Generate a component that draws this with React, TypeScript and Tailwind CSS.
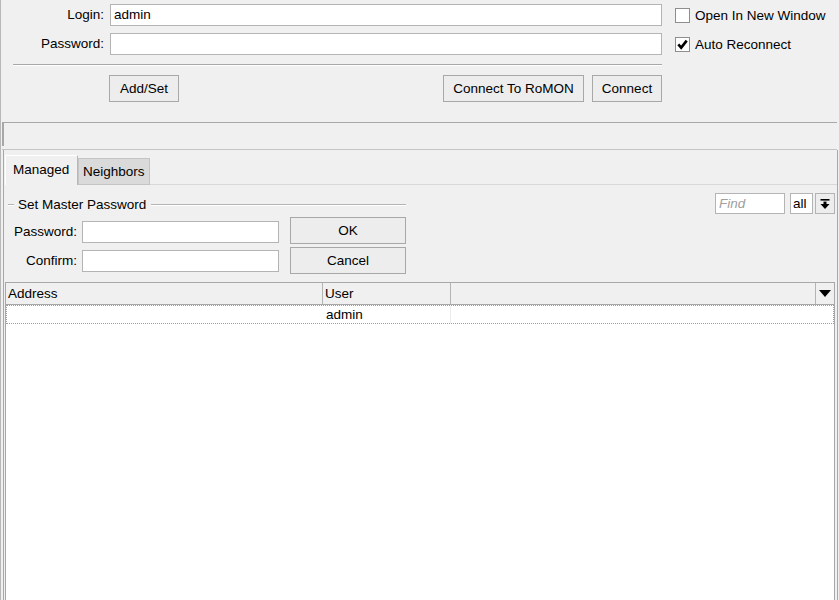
import React from "react";

const inputCls = "bg-white border border-[#b4b4b4] h-[22px] px-[3px] flex items-center";
const btnCls = "bg-[#ededed] border border-[#a8a8a8] h-[27px] flex items-center justify-center";

function Check({ checked }: { checked?: boolean }) {
  return (
    <div className="w-[15px] h-[15px] bg-white border border-[#8e8e8e] flex items-center justify-center">
      {checked && (
        <svg width="11" height="11" viewBox="0 0 11 11">
          <path d="M1.3 5.3 L4.2 8.6 L9.7 1.6" stroke="#000" strokeWidth="2.6" fill="none" />
        </svg>
      )}
    </div>
  );
}

export default function App() {
  return (
    <div className="w-[839px] h-[600px] bg-[#f0f0f0] flex flex-col overflow-hidden border-l border-[#b8b8b8] text-[13.5px] text-black font-['Liberation_Sans',Arial,sans-serif] leading-none">
      {/* Top section */}
      <div className="flex items-start">
        <div className="w-[661px] pt-[4px] flex flex-col">
          <div className="flex items-center">
            <div className="w-[103px] text-right">Login:</div>
            <div className={`${inputCls} ml-[6px] w-[552px]`}>admin</div>
          </div>
          <div className="flex items-center mt-[7px]">
            <div className="w-[103px] text-right">Password:</div>
            <div className={`${inputCls} ml-[6px] w-[552px]`}></div>
          </div>
          <div className="mt-[9px] ml-[12px] w-[649px] h-[2px] border-t border-[#a8a8a8] border-b border-b-white"></div>
          <div className="flex mt-[9px]">
            <div className={`${btnCls} ml-[108px] w-[70px]`}>Add/Set</div>
            <div className={`${btnCls} ml-auto w-[141px]`}>Connect To RoMON</div>
            <div className={`${btnCls} ml-[8px] w-[70px]`}>Connect</div>
          </div>
        </div>
        <div className="ml-[13px] pt-[8px] flex flex-col gap-[14px]">
          <div className="flex items-center gap-[5px]">
            <Check />
            <span>Open In New Window</span>
          </div>
          <div className="flex items-center gap-[5px]">
            <Check checked />
            <span>Auto Reconnect</span>
          </div>
        </div>
      </div>

      {/* Status bar */}
      <div className="mt-[20px] ml-[1px] mr-[2px] h-[28px] border-t border-[#a8a8a8] border-b border-b-[#c4c4c4] flex">
        <div className="w-[3px] h-[23px] border-l-2 border-[#a8a8a8]"></div>
      </div>

      {/* Lower panel */}
      <div className="flex-1 ml-[2px] mr-[1px] border-l border-r border-[#a8a8a8] flex flex-col">
        {/* Tabs */}
        <div className="flex items-end h-[35px]">
          <div className="ml-[1px] w-[73px] h-[30px] border-t border-l border-white border-r border-r-[#b8b8b8] flex items-center pl-[7px] pb-[2px]">
            Managed
          </div>
          <div className="w-[72px] h-[27px] bg-[#dadada] border border-[#c4c4c4] flex items-center pl-[4px] pt-[1px]">
            Neighbors
          </div>
          <div className="flex-1 h-[1px] border-b border-[#d8d8d8]"></div>
        </div>

        {/* Content */}
        <div className="flex pl-[4px]">
          <div className="flex flex-col pt-[12px]">
            <div className="flex items-center h-[16px]">
              <div className="w-[6px] h-[2px] border-t border-[#b4b4b4] border-b border-b-white"></div>
              <span className="ml-[4px]">Set Master Password</span>
              <div className="ml-[5px] w-[255px] h-[2px] border-t border-[#b4b4b4] border-b border-b-white"></div>
            </div>
            <div className="flex items-start mt-[4px]">
              <div className="flex flex-col pt-[4px] gap-[7px]">
                <div className="flex items-center">
                  <div className="w-[69px] text-right">Password:</div>
                  <div className={`${inputCls} ml-[5px] w-[197px]`}></div>
                </div>
                <div className="flex items-center">
                  <div className="w-[69px] text-right">Confirm:</div>
                  <div className={`${inputCls} ml-[5px] w-[197px]`}></div>
                </div>
              </div>
              <div className="ml-[11px] flex flex-col gap-[3px]">
                <div className={`${btnCls} w-[116px]`}>OK</div>
                <div className={`${btnCls} w-[116px]`}>Cancel</div>
              </div>
            </div>
          </div>
          <div className="ml-auto pt-[8px] pr-[2px] flex items-start">
            <div className="w-[70px] h-[21px] bg-white border border-[#b4b4b4] flex items-center pl-[3px] italic text-[#a0a0a0]">
              Find
            </div>
            <div className="ml-[5px] w-[23px] h-[21px] bg-white border border-[#b4b4b4] flex items-center pl-[2px]">
              all
            </div>
            <div className="ml-[2px] w-[20px] h-[21px] bg-[#ededed] border border-[#b4b4b4] flex items-center justify-center">
              <svg width="12" height="12" viewBox="0 0 12 12">
                <rect x="1.5" y="1" width="9" height="1.6" fill="#000" />
                <rect x="4.5" y="3.6" width="3" height="2.4" fill="#000" />
                <path d="M1.5 6 H10.5 L6 11 Z" fill="#000" />
              </svg>
            </div>
          </div>
        </div>

        {/* Table */}
        <div className="flex-1 mt-[8px] ml-[1px] mr-[2px] bg-white border-l border-r border-t border-[#a8a8a8] flex flex-col">
          <div className="h-[22px] bg-[#f0f0f0] border-b border-[#a8a8a8] flex">
            <div className="w-[317px] border-r border-[#b4b4b4] flex items-center pl-[2px]">Address</div>
            <div className="w-[128px] border-r border-[#b4b4b4] flex items-center pl-[2px]">User</div>
            <div className="flex-1 border-r border-[#b4b4b4]"></div>
            <div className="w-[18px] flex items-center justify-center">
              <svg width="12" height="7" viewBox="0 0 12 7">
                <path d="M0 0 H12 L6 7 Z" fill="#000" />
              </svg>
            </div>
          </div>
          <div className="h-[19px] border border-dotted border-[#a0a0a0] flex">
            <div className="w-[316px]"></div>
            <div className="w-[128px] border-r border-[#ececec] flex items-center pl-[3px]">admin</div>
            <div className="flex-1"></div>
          </div>
        </div>
      </div>
    </div>
  );
}
